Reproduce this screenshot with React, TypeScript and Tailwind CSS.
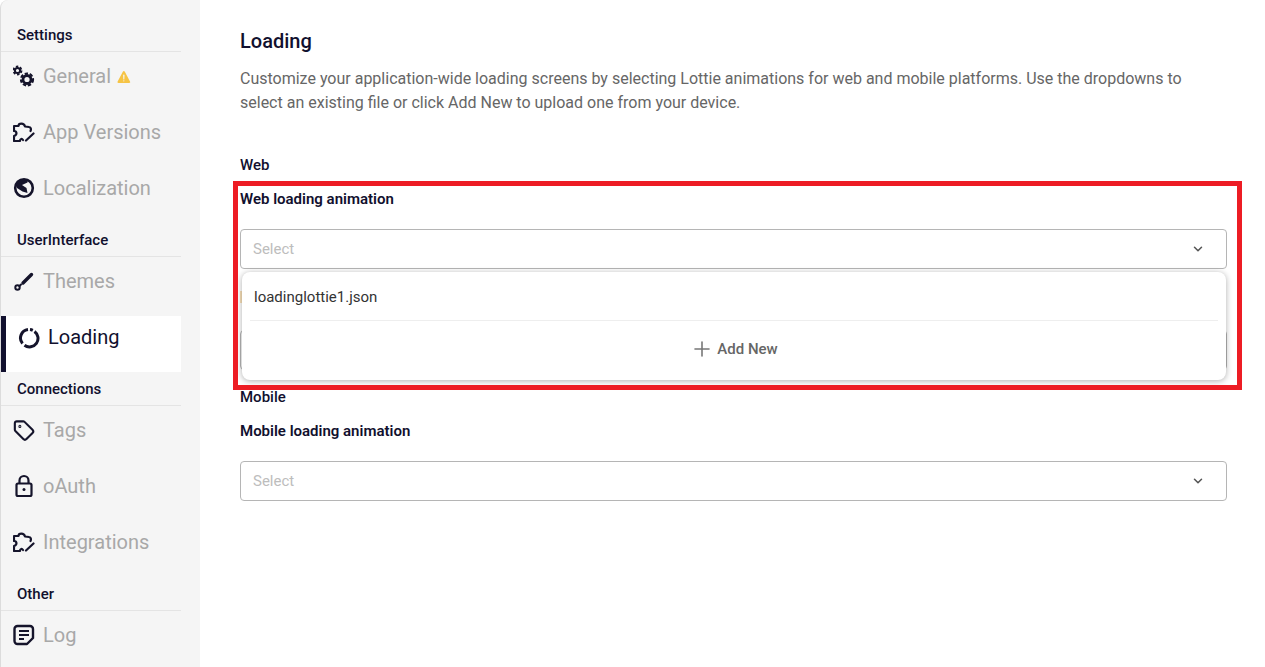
import React from "react";
import { IoWarning } from "react-icons/io5";
import { Plus, ChevronDown, Tag } from "lucide-react";

const INK = "#15142b";

const Gears = () => (
  <svg width="22" height="22" viewBox="0 0 22 22" fill="none" stroke={INK}>
    <circle cx="4.500" cy="5.500" r="2.600" strokeWidth="2" />
    <circle cx="4.500" cy="5.500" r="4" strokeWidth="1.800" strokeDasharray="2.400 1.790" />
    <circle cx="14" cy="14.500" r="4" strokeWidth="2.800" />
    <circle cx="14" cy="14.500" r="6" strokeWidth="2.200" strokeDasharray="3.300 1.750" />
  </svg>
);

const PuzzlePen = () => (
  <svg width="22" height="22" viewBox="0 0 22 22" fill="none" stroke={INK} strokeWidth="2.200" strokeLinecap="round" strokeLinejoin="round">
    <path d="M17.500 10 C18.500 8 17.500 6 16 6 L12 5.500 C11 1.500 5.500 2 5.500 5 H1 V10 C4 10 4.500 14 1 15 V20 H7 C7 17.500 9 17.500 10 19" />
    <path d="M20.500 12.500 L13 19.500" />
  </svg>
);

const Globe = () => (
  <svg width="22" height="22" viewBox="0 0 22 22" fill="none">
    <circle cx="11" cy="11" r="8.800" stroke={INK} strokeWidth="2.600" />
    <path d="M3 8 L6 3 L15 2 L14.500 5.500 L9 8 L13.500 11 L14.500 16 L9.500 14.500 L4 11 Z" fill={INK} />
  </svg>
);

const Brush = () => (
  <svg width="22" height="22" viewBox="0 0 22 22" fill="none" stroke={INK} strokeLinecap="round">
    <path d="M18.500 4.500 L10 13" strokeWidth="3.400" />
    <circle cx="4.500" cy="17.500" r="2.200" strokeWidth="2" />
    <path d="M8 14.500 L6.500 16" strokeWidth="2" />
  </svg>
);

const Ring = () => (
  <svg width="22" height="22" viewBox="0 0 22 22" fill="none" stroke={INK} strokeWidth="3">
    <path d="M10 2.600A8.500 8.500 0 0 0 4.500 16.500" />
    <path d="M6.500 18.300A8.500 8.500 0 0 0 16.500 4.500" />
    <path d="M14.800 3.400A8.500 8.500 0 0 0 12 2.600" />
  </svg>
);

const Lock = () => (
  <svg width="22" height="24" viewBox="0 0 22 24" fill="none" stroke={INK} strokeWidth="2.200">
    <rect x="3.500" y="9.500" width="15" height="12.500" rx="1.500" />
    <path d="M6.500 9.500 V6.500 a4.500 4.500 0 0 1 9 0 V9.500" />
    <circle cx="11" cy="15.500" r="1.500" fill={INK} stroke="none" />
  </svg>
);

const Note = () => (
  <svg width="22" height="22" viewBox="0 0 22 22" fill="none" stroke={INK} strokeWidth="2.400" strokeLinejoin="round">
    <path d="M4.500 2 H17 a3 3 0 0 1 3 3 V14 L14 20 H4.500 a3 3 0 0 1 -3 -3 V5 a3 3 0 0 1 3 -3 Z" />
    <path d="M6 7 H16 M6 11 H16 M6 15 H11" strokeWidth="2" />
  </svg>
);

function Section({ title, h }: { title: string; h: string }) {
  return (
    <div className={`${h} w-[180px] flex items-end pb-[6px] pl-[16px] border-b border-[#e4e4e4] text-[15px] leading-[20px] font-medium text-[#11102e]`}>
      {title}
    </div>
  );
}

function Item({ icon, label, extra }: { icon: React.ReactNode; label: string; extra?: React.ReactNode }) {
  return (
    <div className="h-[56px] w-[180px] flex items-start pt-[10px] pl-[12px] gap-[8px]">
      <span className="w-[22px] h-[24px] flex items-center justify-center shrink-0 mt-[2px]">{icon}</span>
      <span className="text-[20px] leading-[28px] text-[#a8a8a8]">{label}</span>
      {extra}
    </div>
  );
}

function SelectBox() {
  return (
    <div className="h-[40px] w-[987px] border border-[#b5b5b5] rounded-[4px] bg-white flex items-center justify-between pl-[12px] pr-[21px]">
      <span className="text-[15px] text-[#bdbdbd]">Select</span>
      <ChevronDown size={14} color="#555" strokeWidth={2.600} />
    </div>
  );
}

export default function App() {
  return (
    <div className="relative w-[1265px] h-[667px] overflow-hidden bg-white flex" style={{ fontFamily: "Roboto, sans-serif" }}>
      <aside className="w-[200px] shrink-0 bg-[#f5f5f5] border-l border-[#dcdcdc] pt-[16px] rounded-tl-[8px]">
        <Section title="Settings" h="h-[36px]" />
        <Item icon={<Gears />} label="General" extra={<IoWarning size={16} color="#f6c445" className="ml-[-3px] mt-[7px]" />} />
        <Item icon={<PuzzlePen />} label="App Versions" />
        <Item icon={<Globe />} label="Localization" />
        <Section title="UserInterface" h="h-[37px]" />
        <Item icon={<Brush />} label="Themes" />
        <div className="mt-[3px] h-[56px] w-[180px] bg-white border-l-[5px] border-[#11102e] flex items-start pt-[7px] pl-[12px] gap-[8px]">
          <span className="w-[22px] h-[24px] flex items-center justify-center shrink-0 mt-[3px]"><Ring /></span>
          <span className="text-[20px] leading-[28px] text-[#11102e]">Loading</span>
        </div>
        <Section title="Connections" h="h-[34px]" />
        <Item icon={<Tag size={23} color={INK} strokeWidth={2.300} />} label="Tags" />
        <Item icon={<Lock />} label="oAuth" />
        <Item icon={<PuzzlePen />} label="Integrations" />
        <Section title="Other" h="h-[37px]" />
        <Item icon={<Note />} label="Log" />
      </aside>
      <main className="flex-1 pl-[40px] pt-[28px]">
        <h1 className="text-[20px] leading-[26px] font-medium text-[#11102e]">Loading</h1>
        <p className="mt-[13px] w-[985px] text-[16px] leading-[24px] text-[#666666]">
          Customize your application-wide loading screens by selecting Lottie animations for web and mobile platforms. Use the dropdowns to select an existing file or click Add New to upload one from your device.
        </p>
        <div className="mt-[40px] text-[15px] leading-[20px] font-medium text-[#11102e]">Web</div>
        <div className="mt-[14px] text-[15px] leading-[20px] font-semibold text-[#11102e]">Web loading animation</div>
        <div className="mt-[20px]"><SelectBox /></div>
        <div className="mt-[22px] h-[12px] w-[4px] bg-[#f8e0b8]" />
        <div className="mt-[27px]"><SelectBox /></div>
        <div className="mt-[17px] text-[15px] leading-[20px] font-medium text-[#11102e]">Mobile</div>
        <div className="mt-[14px] text-[15px] leading-[20px] font-semibold text-[#11102e]">Mobile loading animation</div>
        <div className="mt-[20px]"><SelectBox /></div>
      </main>

      <div className="absolute left-[242px] top-[272px] w-[984px] h-[108px] bg-white rounded-[8px] shadow-[0_1px_6px_rgba(0,0,0,0.32)]">
        <div className="h-[49px] mx-[8px] border-b border-[#eeeeee] flex items-center pl-[4px] pt-[3px] text-[15px] text-[#333333]">loadinglottie1.json</div>
        <div className="h-[56px] flex items-center justify-center gap-[3px] text-[15px] font-medium text-[#666666]">
          <Plus size={24} color="#777" strokeWidth={1.600} />
          <span>Add New</span>
        </div>
      </div>
      <div className="absolute left-[233px] top-[181px] w-[1009px] h-[209px] border-[5px] border-[#ed1c24] pointer-events-none" />
    </div>
  );
}
